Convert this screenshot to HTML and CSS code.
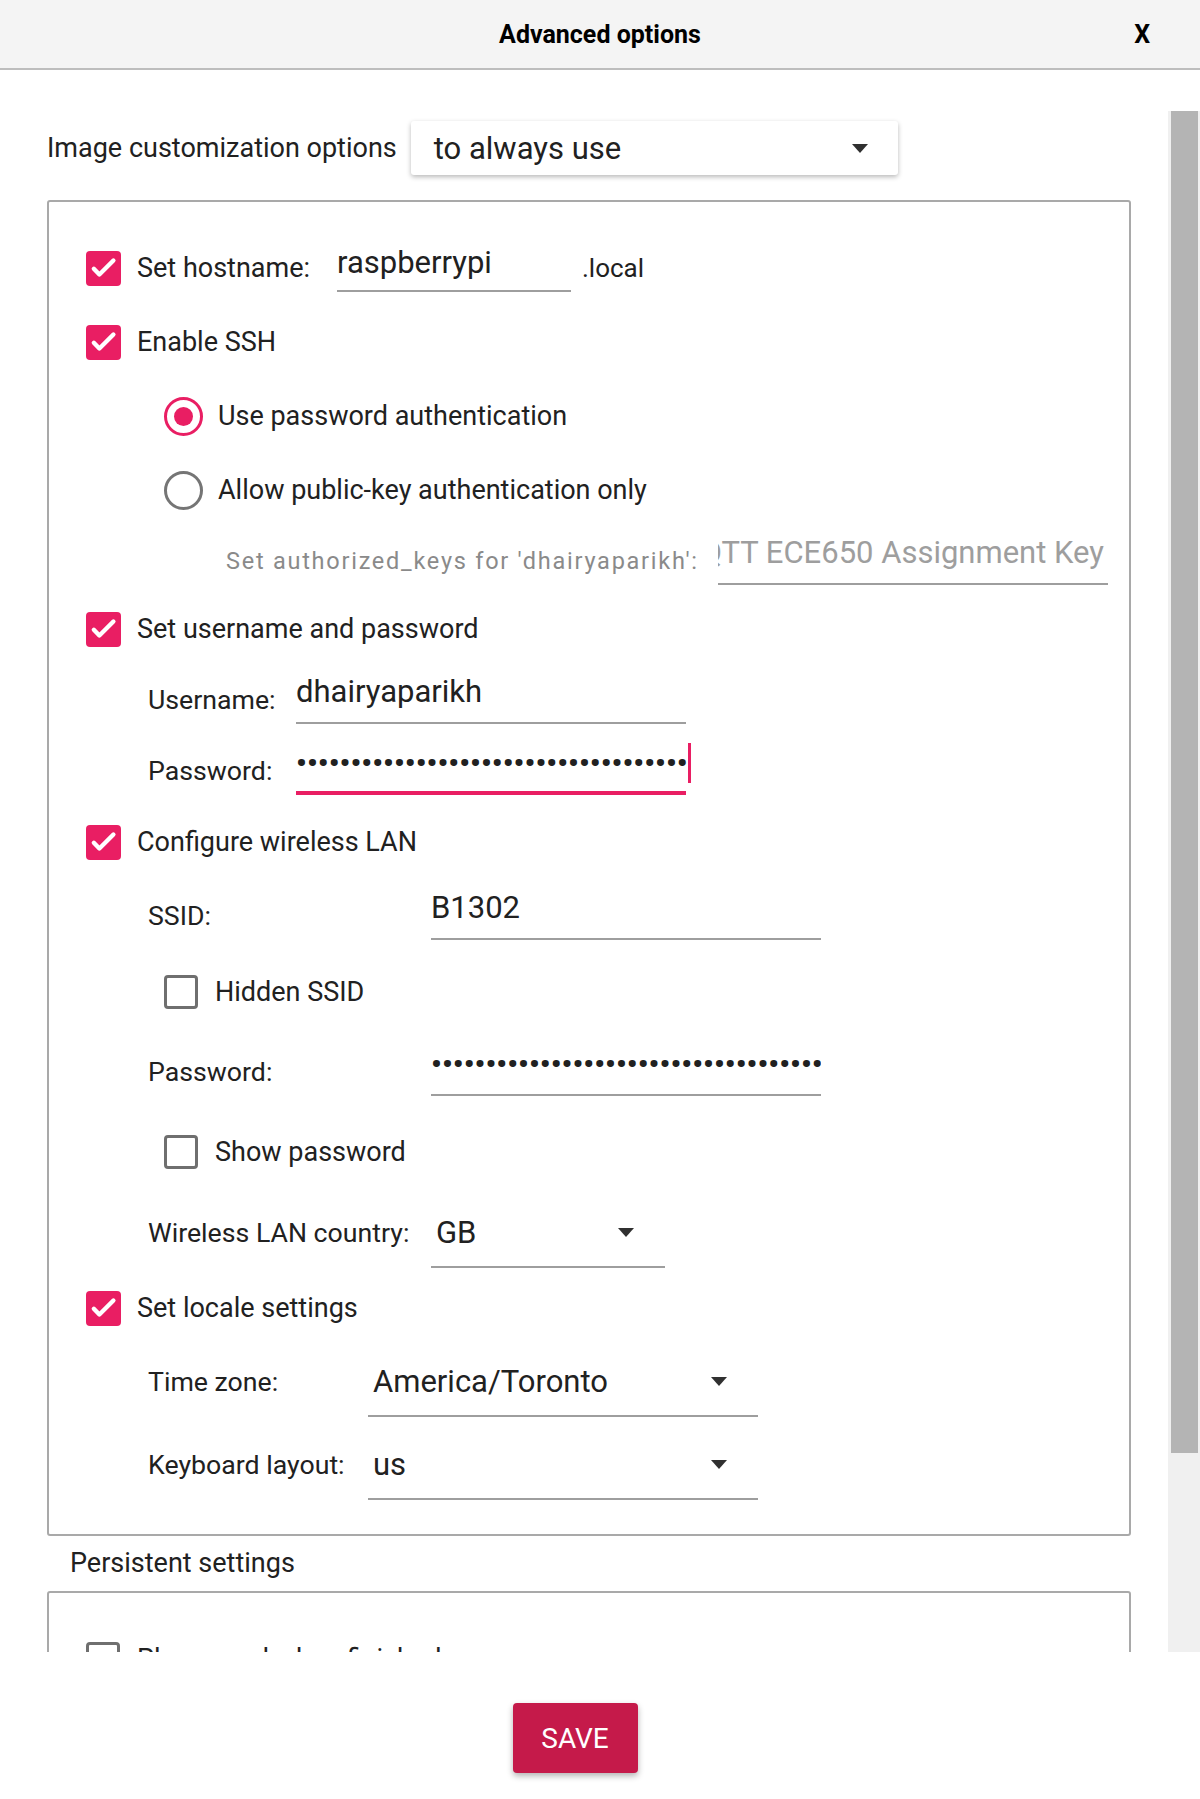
FILE: index.html
```html
<!DOCTYPE html>
<html lang="en">
<head>
    <meta charset="UTF-8">
    <meta name="viewport" content="width=device-width, initial-scale=1.0">
    <title>Advanced options</title>
    <link rel="stylesheet" href="styles.css">
</head>
<body>
    <div class="dialog">
        <div class="titlebar">
            <span></span>
            <h1>Advanced options</h1>
            <span class="close">X</span>
        </div>

        <div class="dialog-body">
            <div class="scroll-wrap">
                <div class="scroll-content">
                    <div class="usage-row">
                        <span class="label">Image customization options</span>
                        <div class="combo">
                            <span>to always use</span>
                            <span class="arrow"></span>
                        </div>
                    </div>

                    <div class="group">
                        <!-- hostname -->
                        <div class="row">
                            <span class="check on"><svg viewBox="0 0 24 24"><path d="M4 12.2l4.6 4.8L20.2 5.4"/></svg></span>
                            <span class="label host-label">Set hostname:</span>
                            <div class="field host">raspberrypi</div>
                            <span class="suffix">.local</span>
                        </div>

                        <!-- ssh -->
                        <div class="row">
                            <span class="check on"><svg viewBox="0 0 24 24"><path d="M4 12.2l4.6 4.8L20.2 5.4"/></svg></span>
                            <span class="label">Enable SSH</span>
                        </div>
                        <div class="row indent">
                            <span class="radio on"></span>
                            <span class="label">Use password authentication</span>
                        </div>
                        <div class="row indent">
                            <span class="radio"></span>
                            <span class="label">Allow public-key authentication only</span>
                        </div>
                        <div class="row short indent-keys">
                            <span class="keys-label">Set authorized_keys for 'dhairyaparikh':</span>
                            <div class="field wide keys"><span>ssh-rsa AAAAB3 MQTT ECE650 Assignment Key</span></div>
                        </div>

                        <!-- user -->
                        <div class="row short">
                            <span class="check on"><svg viewBox="0 0 24 24"><path d="M4 12.2l4.6 4.8L20.2 5.4"/></svg></span>
                            <span class="label">Set username and password</span>
                        </div>
                        <div class="fields user-fields">
                            <div class="row">
                                <span class="sub-label">Username:</span>
                                <div class="field wide">dhairyaparikh</div>
                            </div>
                            <div class="row short">
                                <span class="sub-label">Password:</span>
                                <div class="field wide focus"><span class="dots">••••••••••••••••••••••••••••••••••••</span><span class="caret"></span></div>
                            </div>
                        </div>

                        <!-- wifi -->
                        <div class="row">
                            <span class="check on"><svg viewBox="0 0 24 24"><path d="M4 12.2l4.6 4.8L20.2 5.4"/></svg></span>
                            <span class="label">Configure wireless LAN</span>
                        </div>
                        <div class="fields wifi-fields">
                            <div class="row">
                                <span class="sub-label">SSID:</span>
                                <div class="field wide">B1302</div>
                            </div>
                            <div class="row mid indent">
                                <span class="check off"></span>
                                <span class="label">Hidden SSID</span>
                            </div>
                            <div class="row tall">
                                <span class="sub-label">Password:</span>
                                <div class="field wide"><span class="dots">••••••••••••••••••••••••••••••••••••</span></div>
                            </div>
                            <div class="row mid indent">
                                <span class="check off"></span>
                                <span class="label">Show password</span>
                            </div>
                            <div class="row taller">
                                <span class="sub-label">Wireless LAN country:</span>
                                <div class="select narrow"><span>GB</span><span class="arrow"></span></div>
                            </div>
                        </div>

                        <!-- locale -->
                        <div class="row locale">
                            <span class="check on"><svg viewBox="0 0 24 24"><path d="M4 12.2l4.6 4.8L20.2 5.4"/></svg></span>
                            <span class="label">Set locale settings</span>
                        </div>
                        <div class="fields locale-fields">
                            <div class="row tall">
                                <span class="sub-label">Time zone:</span>
                                <div class="select"><span>America/Toronto</span><span class="arrow"></span></div>
                            </div>
                            <div class="row taller">
                                <span class="sub-label">Keyboard layout:</span>
                                <div class="select"><span>us</span><span class="arrow"></span></div>
                            </div>
                        </div>
                    </div>

                    <div class="group-title">Persistent settings</div>

                    <div class="group">
                        <div class="row">
                            <span class="check off"></span>
                            <span class="label">Play sound when finished</span>
                        </div>
                        <div class="row">
                            <span class="check off"></span>
                            <span class="label">Eject media when finished</span>
                        </div>
                        <div class="row">
                            <span class="check off"></span>
                            <span class="label">Enable telemetry</span>
                        </div>
                    </div>
                </div>

                <div class="scrollbar">
                    <div class="thumb"></div>
                </div>
            </div>

            <div class="footer">
                <button class="save-btn">SAVE</button>
            </div>
        </div>
    </div>
</body>
</html>
```

FILE: styles.css
```css
* {
    margin: 0;
    padding: 0;
    box-sizing: border-box;
}

body {
    font-family: Roboto, 'Liberation Sans', sans-serif;
    color: #212121;
    background: #fff;
}

.dialog {
    width: 1200px;
    height: 1799px;
    display: flex;
    flex-direction: column;
}

/* title bar */
.titlebar {
    height: 70px;
    flex: none;
    background: #f4f4f4;
    border-bottom: 2px solid #bdbdbd;
    display: grid;
    grid-template-columns: 1fr auto 1fr;
    align-items: center;
}

.titlebar h1 {
    font-size: 25px;
    font-weight: bold;
    color: #000;
}

.close {
    justify-self: end;
    margin-right: 50px;
    font-size: 25px;
    font-weight: bold;
    color: #000;
}

.dialog-body {
    flex: 1;
    display: flex;
    flex-direction: column;
    padding-top: 41px;
}

.scroll-wrap {
    height: 1541px;
    display: flex;
}

.scroll-content {
    flex: 1;
    overflow: hidden;
    padding: 10px 37px 0 47px;
}

.scrollbar {
    width: 32px;
    background: #f0f0f0;
    padding: 0 2px 0 3px;
}

.thumb {
    height: 1342px;
    background: #b4b4b4;
}

/* top combo */
.usage-row {
    display: flex;
    align-items: center;
    gap: 14px;
    height: 54px;
}

.label {
    font-size: 27px;
    white-space: nowrap;
}

.combo {
    width: 487px;
    height: 54px;
    background: #fff;
    border-radius: 3px;
    box-shadow: 0 2px 5px rgba(0,0,0,0.28);
    display: flex;
    align-items: center;
    padding-left: 23px;
    font-size: 31px;
}

.arrow {
    margin-left: auto;
    margin-right: 30px;
    width: 0;
    height: 0;
    border-left: 8px solid transparent;
    border-right: 8px solid transparent;
    border-top: 9px solid #303030;
}

/* grouped options */
.group {
    margin-top: 25px;
    border: 2px solid #a9a9a9;
    border-radius: 3px;
    padding: 29px 0 27px 37px;
}

.row {
    height: 74px;
    display: flex;
    align-items: center;
}

.row.short { height: 68px; }
.row.locale { height: 66px; }
.row.mid { height: 78px; }
.row.tall { height: 82px; }
.row.taller { height: 84px; }

.row.indent { padding-left: 78px; }
.row.indent-keys { padding-left: 140px; }

.check {
    width: 35px;
    height: 35px;
    flex: none;
    border-radius: 4px;
    margin-right: 16px;
    display: flex;
    align-items: center;
    justify-content: center;
}

.check.on {
    background: #e91e63;
}

.check.on svg {
    width: 29px;
    height: 29px;
    fill: none;
    stroke: #fff;
    stroke-width: 3.6;
    stroke-linecap: round;
    stroke-linejoin: round;
}

.check.off {
    width: 34px;
    height: 34px;
    border: 3px solid #6f6f6f;
    margin-right: 17px;
}

.radio {
    width: 39px;
    height: 39px;
    flex: none;
    border-radius: 50%;
    border: 3px solid #757575;
    margin-right: 15px;
    display: flex;
    align-items: center;
    justify-content: center;
}

.radio.on {
    border-color: #e91e63;
}

.radio.on::after {
    content: '';
    width: 19px;
    height: 19px;
    border-radius: 50%;
    background: #e91e63;
}

.host-label {
    width: 200px;
}

.suffix {
    font-size: 26px;
    margin-left: 11px;
}

.keys-label {
    width: 492px;
    font-size: 23.5px;
    letter-spacing: 1.75px;
    color: #8a8a8a;
    white-space: nowrap;
}

/* text fields */
.field {
    width: 234px;
    height: 48px;
    border-bottom: 2px solid #9e9e9e;
    font-size: 31px;
    line-height: 31px;
    white-space: nowrap;
    overflow: hidden;
    flex: none;
}

.field.host {
    padding-top: 3px;
}

.field.wide { width: 390px; }

.field.keys {
    display: flex;
    justify-content: flex-end;
    color: #9e9e9e;
    padding-right: 4px;
}

.field.focus {
    border-bottom: 4px solid #e91e63;
    overflow: visible;
    display: flex;
}

.dots {
    font-size: 30px;
    letter-spacing: 0.1px;
    font-weight: bold;
}

.caret {
    width: 3px;
    height: 40px;
    margin-top: -4px;
    flex: none;
    background: #e91e63;
}

.fields .row {
    padding-left: 62px;
}

.fields .row.indent {
    padding-left: 78px;
}

.sub-label {
    font-size: 26.7px;
    white-space: nowrap;
    flex: none;
}

.user-fields .sub-label { width: 148px; }
.wifi-fields .sub-label { width: 283px; }
.locale-fields .sub-label { width: 220px; }

.select {
    width: 390px;
    height: 70px;
    border-bottom: 2px solid #9e9e9e;
    display: flex;
    align-items: center;
    padding-left: 5px;
    font-size: 31px;
    flex: none;
}

.select.narrow { width: 234px; }

.select .arrow {
    margin-right: 31px;
}

.group-title {
    height: 55px;
    line-height: 55px;
    padding-left: 23px;
    font-size: 27px;
}

.group-title + .group {
    margin-top: 0;
}

/* footer */
.footer {
    flex: 1;
    display: flex;
    justify-content: center;
    padding-top: 51px;
    padding-right: 50px;
}

.save-btn {
    width: 125px;
    height: 70px;
    background: #c51a4a;
    color: #fff;
    border: none;
    border-radius: 4px;
    font-family: Roboto, 'Liberation Sans', sans-serif;
    font-size: 28px;
    box-shadow: 0 3px 6px rgba(0,0,0,0.3);
}
```
